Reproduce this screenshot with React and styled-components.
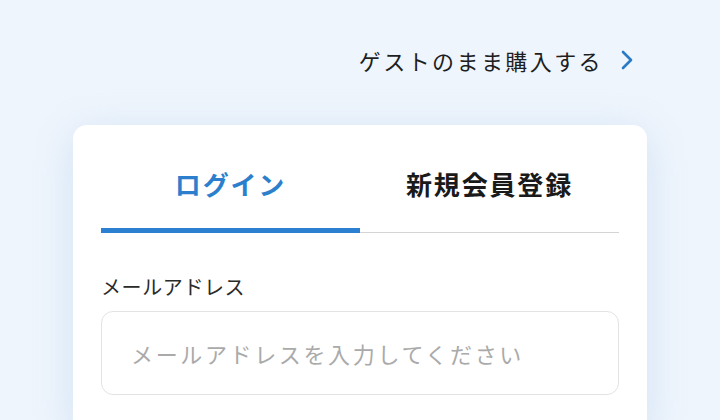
import React, { useState } from "react";
import styled, { createGlobalStyle } from "styled-components";

const GlobalStyle = createGlobalStyle`
  html, body {
    margin: 0;
    padding: 0;
    background: #eff5fc;
    font-family: "Noto Sans CJK JP", "Noto Sans", sans-serif;
    color: #222;
  }
`;

function App() {
  const [tab, setTab] = useState("login");

  return (
    <Page>
      <GlobalStyle />
      <GuestRow>
        <GuestLink href="#">
          ゲストのまま購入する
          <Chevron viewBox="0 0 12 20" aria-hidden="true">
            <path d="M2 2l8 8-8 8" />
          </Chevron>
        </GuestLink>
      </GuestRow>
      <Card>
        <TabList>
          <Tab active={tab === "login"} onClick={() => setTab("login")}>
            ログイン
          </Tab>
          <Tab active={tab === "signup"} onClick={() => setTab("signup")}>
            新規会員登録
          </Tab>
        </TabList>
        <Field>
          <Label htmlFor="email">メールアドレス</Label>
          <Input id="email" type="email" placeholder="メールアドレスを入力してください" />
        </Field>
      </Card>
    </Page>
  );
}

const Page = styled.div`
  width: 720px;
  height: 420px;
  box-sizing: border-box;
  padding: 40px 73px 0;
  overflow: hidden;
`;

const GuestRow = styled.div`
  display: flex;
  justify-content: flex-end;
  padding-right: 14px;
  height: 40px;
  margin-bottom: 45px;
`;

const GuestLink = styled.a`
  display: flex;
  align-items: center;
  gap: 18px;
  font-size: 22px;
  letter-spacing: 0.11em;
  color: #1e1e1e;
  text-decoration: none;
  line-height: 40px;
`;

const Chevron = styled.svg`
  width: 12px;
  height: 20px;
  fill: none;
  stroke: #2b7bc4;
  stroke-width: 2.6;
  stroke-linecap: round;
  stroke-linejoin: round;
`;

const Card = styled.div`
  background: #fff;
  border-radius: 14px;
  padding: 24px 28px 40px;
  box-shadow: 0 8px 40px rgba(170, 205, 240, 0.45);
`;

const TabList = styled.div`
  display: flex;
  border-bottom: 1px solid #d4d4d4;
`;

const Tab = styled.button`
  flex: 1;
  background: none;
  border: none;
  border-bottom: 5px solid ${(p) => (p.active ? "#2b80d2" : "transparent")};
  margin-bottom: -1px;
  padding: 17px 0 26px;
  font-family: inherit;
  font-size: 26px;
  font-weight: 700;
  line-height: 36px;
  letter-spacing: 0.07em;
  color: ${(p) => (p.active ? "#2b7fcd" : "#1a1a1a")};
  cursor: pointer;
`;

const Field = styled.div`
  display: flex;
  flex-direction: column;
  margin-top: 40px;
`;

const Label = styled.label`
  font-size: 20px;
  line-height: 28px;
  color: #2a2a2a;
  letter-spacing: 0.03em;
  margin-bottom: 10px;
`;

const Input = styled.input`
  box-sizing: border-box;
  height: 84px;
  border: 1px solid #e3e3e3;
  border-radius: 12px;
  padding: 0 29px;
  font-family: inherit;
  font-size: 22px;
  letter-spacing: 0.12em;
  color: #222;
  outline: none;
  &::placeholder {
    color: #aaa;
  }
`;

export default App;
